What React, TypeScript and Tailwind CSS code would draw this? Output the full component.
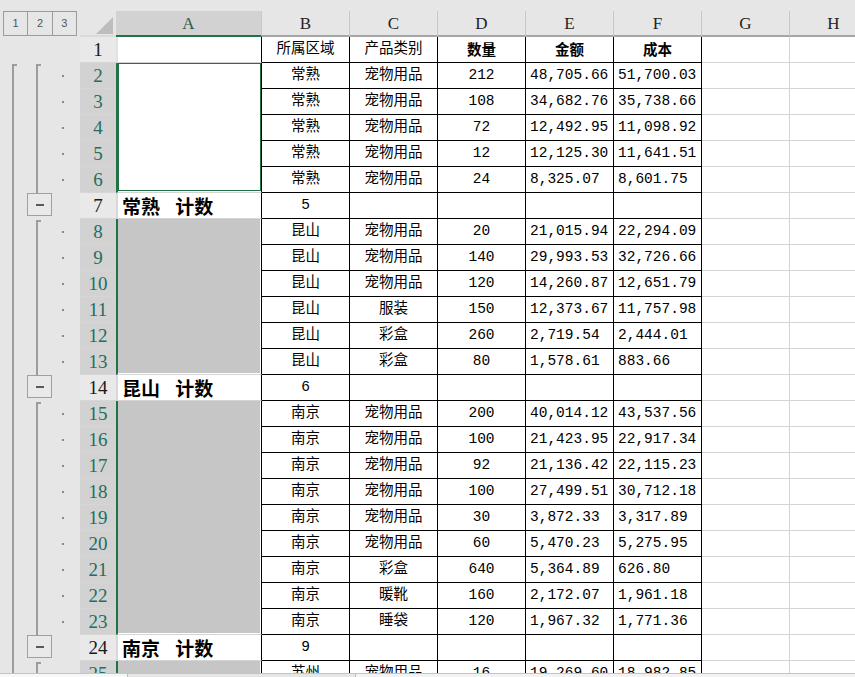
import React from 'react';

type Kind = 'head' | 'active' | 'sel' | 'total';

interface SheetRow {
  n: number;
  kind: Kind;
  first?: boolean;
  last?: boolean;
  a?: string;
  cells: string[];
  l1: 'none' | 'start' | 'line';
  l2: 'none' | 'start' | 'line' | 'box';
}

const groups: { city: string; kind: Kind; items: string[][]; total?: boolean }[] = [
  {
    city: '常熟',
    kind: 'active',
    total: true,
    items: [
      ['宠物用品', '212', '48,705.66', '51,700.03'],
      ['宠物用品', '108', '34,682.76', '35,738.66'],
      ['宠物用品', '72', '12,492.95', '11,098.92'],
      ['宠物用品', '12', '12,125.30', '11,641.51'],
      ['宠物用品', '24', '8,325.07', '8,601.75'],
    ],
  },
  {
    city: '昆山',
    kind: 'sel',
    total: true,
    items: [
      ['宠物用品', '20', '21,015.94', '22,294.09'],
      ['宠物用品', '140', '29,993.53', '32,726.66'],
      ['宠物用品', '120', '14,260.87', '12,651.79'],
      ['服装', '150', '12,373.67', '11,757.98'],
      ['彩盒', '260', '2,719.54', '2,444.01'],
      ['彩盒', '80', '1,578.61', '883.66'],
    ],
  },
  {
    city: '南京',
    kind: 'sel',
    total: true,
    items: [
      ['宠物用品', '200', '40,014.12', '43,537.56'],
      ['宠物用品', '100', '21,423.95', '22,917.34'],
      ['宠物用品', '92', '21,136.42', '22,115.23'],
      ['宠物用品', '100', '27,499.51', '30,712.18'],
      ['宠物用品', '30', '3,872.33', '3,317.89'],
      ['宠物用品', '60', '5,470.23', '5,275.95'],
      ['彩盒', '640', '5,364.89', '626.80'],
      ['暖靴', '160', '2,172.07', '1,961.18'],
      ['睡袋', '120', '1,967.32', '1,771.36'],
    ],
  },
  {
    city: '苏州',
    kind: 'sel',
    items: [['宠物用品', '16', '19,269.60', '18,982.85']],
  },
];

const buildRows = (): SheetRow[] => {
  const rows: SheetRow[] = [
    { n: 1, kind: 'head', cells: ['所属区域', '产品类别', '数量', '金额', '成本'], l1: 'none', l2: 'none' },
  ];
  let n = 2;
  groups.forEach((g) => {
    g.items.forEach((it, i) => {
      rows.push({
        n: n++,
        kind: g.kind,
        first: i === 0,
        last: i === g.items.length - 1,
        cells: [g.city, ...it],
        l1: n === 3 ? 'start' : 'line',
        l2: i === 0 ? 'start' : 'line',
      });
    });
    if (g.total) {
      rows.push({
        n: n++,
        kind: 'total',
        a: g.city,
        cells: [String(g.items.length), '', '', '', ''],
        l1: 'line',
        l2: 'box',
      });
    }
  });
  return rows;
};

const rows = buildRows();
const cols = ['A', 'B', 'C', 'D', 'E', 'F', 'G', 'H'];

const Outline = ({ row }: { row: SheetRow }) => (
  <div className="w-[80px] h-full shrink-0 flex">
    <div className="w-[24px] h-full pl-3 flex flex-col">
      {row.l1 === 'start' && <div className="mt-px w-[5px] flex-1 border-l-2 border-t-2 border-[#9c9c9c]" />}
      {row.l1 === 'line' && <div className="w-[2px] h-full bg-[#9c9c9c]" />}
    </div>
    <div className="w-[30px] h-full flex flex-col">
      {row.l2 === 'start' && <div className="ml-3 mt-px w-[5px] flex-1 border-l-2 border-t-2 border-[#9c9c9c]" />}
      {row.l2 === 'line' && <div className="ml-3 w-[2px] h-full bg-[#9c9c9c]" />}
      {row.l2 === 'box' && (
        <div className="ml-[3px] w-[25px] h-[23px] border border-[#a0a0a0] bg-[#e9e9e9] flex items-center justify-center">
          <div className="w-[8px] h-[2px] bg-[#5a5a5a]" />
        </div>
      )}
    </div>
    <div className="w-[26px] h-full pl-2 flex items-center">
      {(row.kind === 'active' || row.kind === 'sel') && <div className="w-[2px] h-[2px] bg-[#8a8a8a]" />}
    </div>
  </div>
);

const CellA = ({ row }: { row: SheetRow }) => {
  if (row.kind === 'head') {
    return <div className="w-[146px] h-full shrink-0 bg-white border-l-2 border-l-[#e2e2e2] border-r border-r-black border-b border-b-[#d4d4d4]" />;
  }
  if (row.kind === 'total') {
    return (
      <div className="w-[146px] h-full shrink-0 bg-white border-l-2 border-l-[#d8d8d8] border-r border-r-black border-b border-b-[#d4d4d4] flex items-center pl-1 font-['Noto_Sans_CJK_SC',sans-serif] font-bold text-[19px] leading-none text-black [word-spacing:11px]">
        {row.a} 计数
      </div>
    );
  }
  if (row.kind === 'active') {
    return (
      <div className={`w-[146px] h-full shrink-0 bg-white flex flex-col border-l-2 border-l-[#217346] border-r border-r-black ${row.last ? 'border-b border-b-[#d4d4d4]' : ''}`}>
        <div className={`flex-1 border-x border-[#217346] ${row.first ? 'border-t' : ''} ${row.last ? 'border-b mb-px' : ''}`} />
      </div>
    );
  }
  return (
    <div className={`w-[146px] h-full shrink-0 bg-white flex flex-col border-l-2 border-l-[#217346] border-r border-r-black ${row.last ? 'border-b border-b-[#d4d4d4]' : ''}`}>
      <div className={`flex-1 mr-px bg-[#c6c6c6] ${row.last ? 'mb-px' : ''}`} />
    </div>
  );
};

const DataRow = ({ row }: { row: SheetRow }) => {
  const selected = row.kind === 'active' || row.kind === 'sel';
  const isHead = row.kind === 'head';
  return (
    <div className="flex h-[26px] shrink-0">
      <Outline row={row} />
      <div
        className={`w-[36px] h-full shrink-0 border-b border-[#d6d6d6] flex items-center justify-center font-['Liberation_Serif',serif] text-[19px] leading-none ${
          selected ? 'bg-[#d2d2d2] text-[#246e5c]' : 'bg-[#e9e9e9] text-[#1a1a1a]'
        }`}
      >
        {row.n}
      </div>
      <CellA row={row} />
      {row.cells.map((c, i) => (
        <div
          key={i}
          className={`w-[88px] h-full shrink-0 bg-white border-r border-b border-black flex items-center text-[14.5px] leading-none text-black ${
            i >= 3 && !isHead ? 'justify-start pl-1' : 'justify-center'
          } ${isHead && i >= 2 ? "font-bold font-['Noto_Sans_CJK_SC',sans-serif]" : "font-['Liberation_Mono','Noto_Sans_CJK_SC',monospace]"}`}
        >
          {c}
        </div>
      ))}
      <div className="w-[88px] h-full shrink-0 bg-white border-r border-b border-[#d4d4d4]" />
      <div className="w-[88px] h-full shrink-0 bg-white border-r border-b border-[#d4d4d4]" />
    </div>
  );
};

export default function App() {
  return (
    <div className="w-[855px] h-[677px] overflow-hidden bg-[#e6e6e6] flex flex-col">
      <div className="h-[11px] shrink-0" />
      <div className="flex h-[26px] shrink-0">
        <div className="w-[80px] h-full shrink-0 pl-[3px]">
          <div className="flex w-[74px] h-[25px] border border-[#9a9a9a] divide-x divide-[#9a9a9a] font-['Liberation_Sans',sans-serif] text-[11px] text-[#555]">
            <div className="flex-1 flex items-center justify-center">1</div>
            <div className="flex-1 flex items-center justify-center">2</div>
            <div className="flex-1 flex items-center justify-center">3</div>
          </div>
        </div>
        <div className="w-[36px] h-full shrink-0 border-b-2 border-[#dadada] flex items-end justify-end pr-[3px] pb-[1px]">
          <svg width="17" height="17" viewBox="0 0 17 17">
            <polygon points="17,0 17,17 0,17" fill="#bdbdbd" />
          </svg>
        </div>
        {cols.map((c) => (
          <div
            key={c}
            className={`${c === 'A' ? 'w-[146px] bg-[#d2d2d2] border-b-[#217346] text-[#2c5a46]' : 'w-[88px] bg-[#e6e6e6] border-b-[#a6a6a6] text-[#222]'} h-full shrink-0 border-b-2 border-r border-r-[#c8c8c8] flex items-center justify-center font-['Liberation_Serif',serif] text-[17px] leading-none`}
          >
            {c}
          </div>
        ))}
      </div>
      <div className="h-[636px] shrink-0 overflow-hidden flex flex-col">
        {rows.map((r) => (
          <DataRow key={r.n} row={r} />
        ))}
      </div>
      <div className="h-[4px] shrink-0 flex border-t border-[#c4c4c4]">
        <div className="w-[128px] bg-[#f7f7f7] border-r border-[#bdbdbd]" />
        <div className="w-[227px] bg-[#e6e6e6]" />
        <div className="flex-1 bg-[#f3f3f3] border-l border-[#bdbdbd]" />
      </div>
    </div>
  );
}
